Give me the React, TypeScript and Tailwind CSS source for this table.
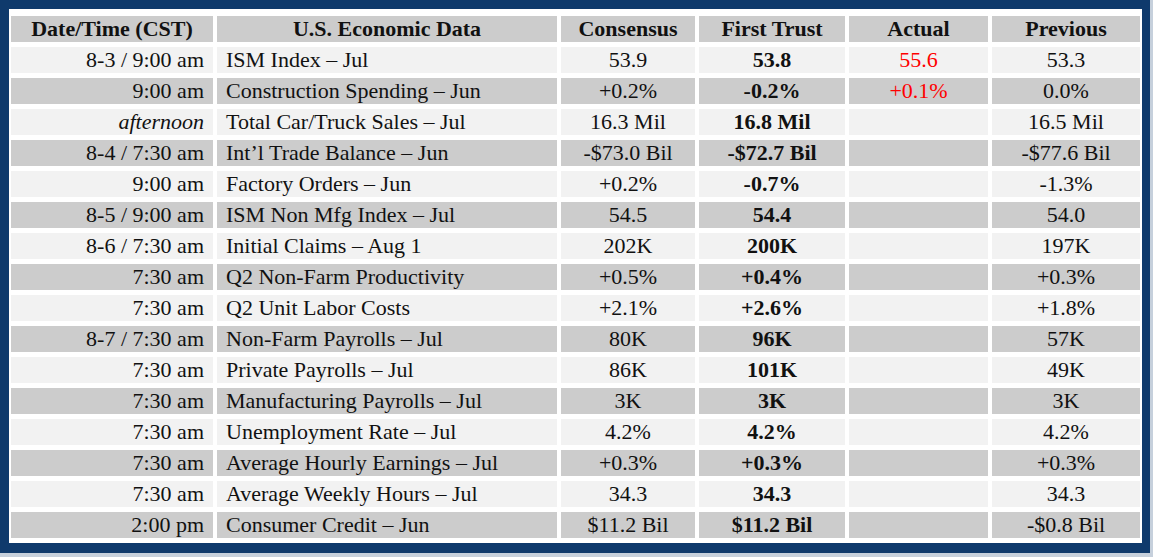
import React from "react";

type Row = {
  date: string;
  italic?: boolean;
  name: string;
  cons: string;
  ft: string;
  actual?: string;
  prev: string;
};

const rows: Row[] = [
  { date: "8-3 / 9:00 am", name: "ISM Index – Jul", cons: "53.9", ft: "53.8", actual: "55.6", prev: "53.3" },
  { date: "9:00 am", name: "Construction Spending – Jun", cons: "+0.2%", ft: "-0.2%", actual: "+0.1%", prev: "0.0%" },
  { date: "afternoon", italic: true, name: "Total Car/Truck Sales – Jul", cons: "16.3 Mil", ft: "16.8 Mil", prev: "16.5 Mil" },
  { date: "8-4 / 7:30 am", name: "Int’l Trade Balance – Jun", cons: "-$73.0 Bil", ft: "-$72.7 Bil", prev: "-$77.6 Bil" },
  { date: "9:00 am", name: "Factory Orders – Jun", cons: "+0.2%", ft: "-0.7%", prev: "-1.3%" },
  { date: "8-5 / 9:00 am", name: "ISM Non Mfg Index – Jul", cons: "54.5", ft: "54.4", prev: "54.0" },
  { date: "8-6 / 7:30 am", name: "Initial Claims – Aug 1", cons: "202K", ft: "200K", prev: "197K" },
  { date: "7:30 am", name: "Q2 Non-Farm Productivity", cons: "+0.5%", ft: "+0.4%", prev: "+0.3%" },
  { date: "7:30 am", name: "Q2 Unit Labor Costs", cons: "+2.1%", ft: "+2.6%", prev: "+1.8%" },
  { date: "8-7 / 7:30 am", name: "Non-Farm Payrolls – Jul", cons: "80K", ft: "96K", prev: "57K" },
  { date: "7:30 am", name: "Private Payrolls – Jul", cons: "86K", ft: "101K", prev: "49K" },
  { date: "7:30 am", name: "Manufacturing Payrolls – Jul", cons: "3K", ft: "3K", prev: "3K" },
  { date: "7:30 am", name: "Unemployment Rate – Jul", cons: "4.2%", ft: "4.2%", prev: "4.2%" },
  { date: "7:30 am", name: "Average Hourly Earnings – Jul", cons: "+0.3%", ft: "+0.3%", prev: "+0.3%" },
  { date: "7:30 am", name: "Average Weekly Hours – Jul", cons: "34.3", ft: "34.3", prev: "34.3" },
  { date: "2:00 pm", name: "Consumer Credit – Jun", cons: "$11.2 Bil", ft: "$11.2 Bil", prev: "-$0.8 Bil" },
];

const headers = ["Date/Time (CST)", "U.S. Economic Data", "Consensus", "First Trust", "Actual", "Previous"];

export default function App() {
  return (
    <div
      className="w-[1153px] h-[557px] bg-[#c6d0dc] overflow-hidden text-[#111] text-[22px] leading-[26px]"
      style={{ fontFamily: '"Liberation Serif", "Times New Roman", serif' }}
    >
      <div className="w-[1150px] h-[553px] bg-[#0f3a6c] pl-[9px] pt-[9px] pr-[8px] pb-[10px]">
        <div className="w-full h-full bg-white pl-[2px] pr-[2px] pt-[7px]">
          <div className="grid grid-cols-[202px_340px_134px_146px_139px_148px] gap-x-[4px] gap-y-[5px] auto-rows-[26px]">
            {headers.map((h) => (
              <div key={h} className="bg-[#cccccc] font-bold text-center whitespace-nowrap">
                {h}
              </div>
            ))}
            {rows.map((r, i) => {
              const bg = i % 2 === 0 ? "bg-[#f2f2f2]" : "bg-[#cccccc]";
              return (
                <React.Fragment key={i}>
                  <div className={`${bg} text-right pr-[9px] whitespace-nowrap ${r.italic ? "italic" : ""}`}>{r.date}</div>
                  <div className={`${bg} text-left pl-[9px] whitespace-nowrap`}>{r.name}</div>
                  <div className={`${bg} text-center whitespace-nowrap`}>{r.cons}</div>
                  <div className={`${bg} text-center font-bold whitespace-nowrap`}>{r.ft}</div>
                  <div className={`${bg} text-center text-[#ff0000] whitespace-nowrap`}>{r.actual ?? ""}</div>
                  <div className={`${bg} text-center whitespace-nowrap`}>{r.prev}</div>
                </React.Fragment>
              );
            })}
          </div>
        </div>
      </div>
    </div>
  );
}
